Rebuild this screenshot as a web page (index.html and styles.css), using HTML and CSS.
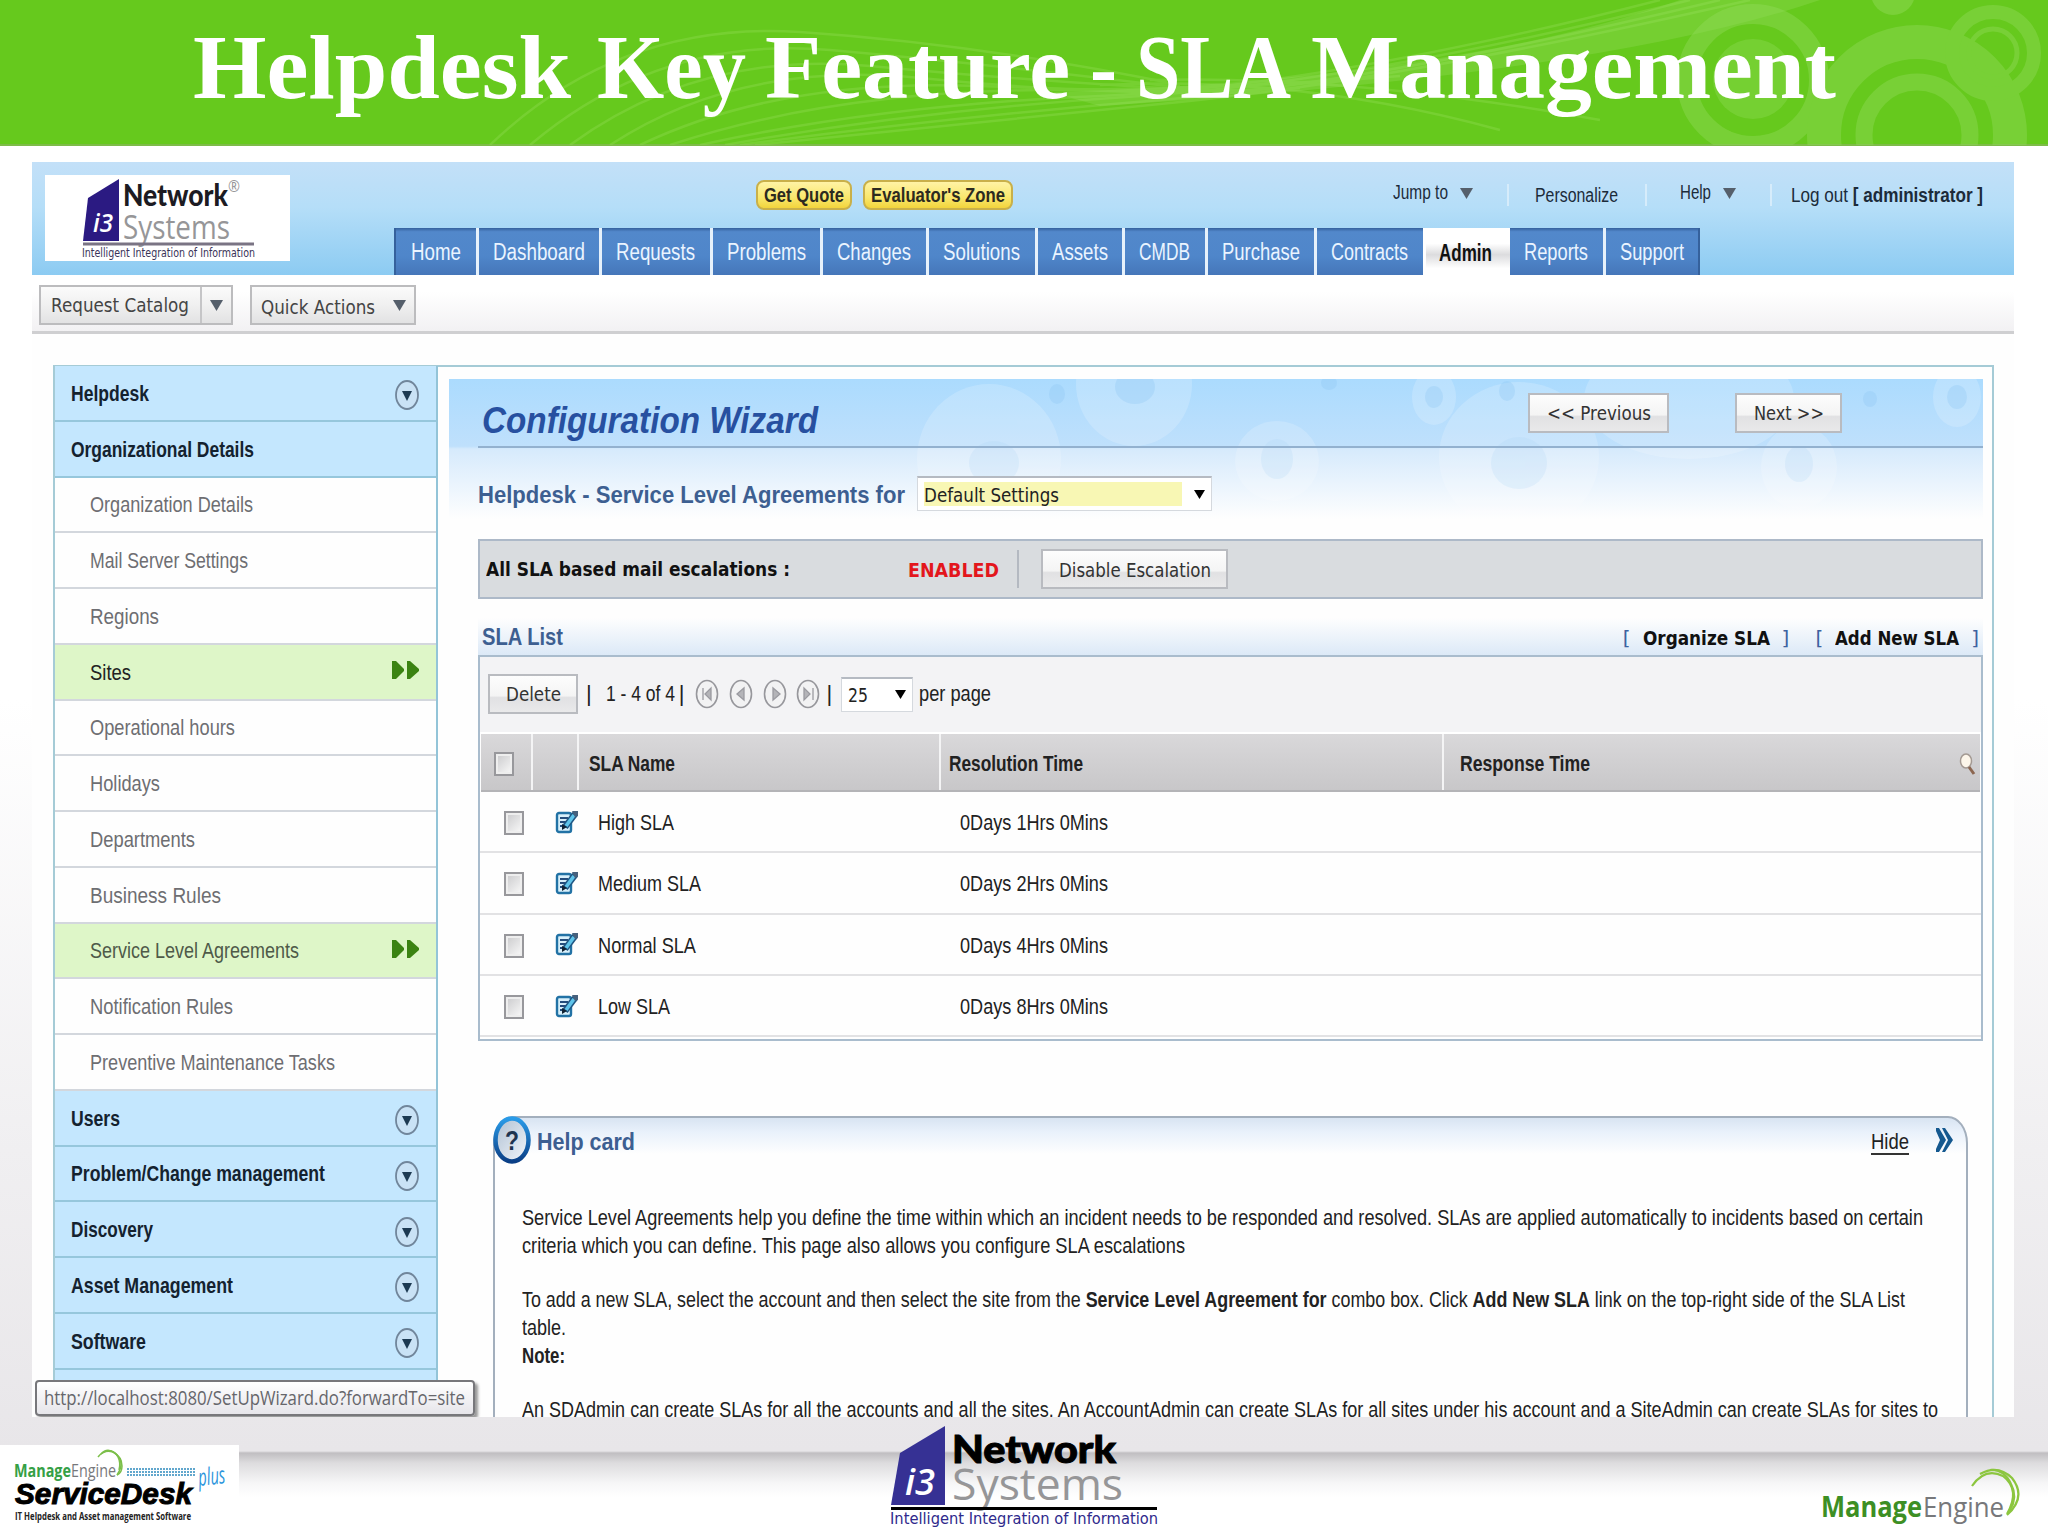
FILE: index.html
```html
<!DOCTYPE html>
<html lang="en">
<head>
  <meta charset="UTF-8" />
  <meta name="viewport" content="width=device-width, initial-scale=1.0"/>
  <title>Helpdesk Key Feature - SLA Management</title>
  <link rel="stylesheet" href="styles.css">
</head>
<body>
  <!-- shared icons -->
  <svg class="sprite" width="0" height="0">
    <symbol id="toggle" viewBox="0 0 24 30" preserveAspectRatio="none">
      <ellipse cx="12" cy="15" rx="11" ry="14" fill="#c9e2f5" stroke="#71869b" stroke-width="1.8"/>
      <path d="M7 11h10l-5 10z" fill="#1d3a52"/>
    </symbol>
    <symbol id="go" viewBox="0 0 27 18">
      <path d="M0 0h4l8 8v2l-8 8H0zM15 0h3l9 8v2l-9 8h-3z" fill="#3b8312"/>
    </symbol>
    <symbol id="edit" viewBox="0 0 23 24">
      <rect x="2" y="3" width="14" height="19" rx="2" fill="#d8f0fb" stroke="#2272a5" stroke-width="2.4"/>
      <path d="M5 8h8M5 12h6M5 16h4" stroke="#244d7c" stroke-width="1.8"/>
      <path d="M20 4 10 17" stroke="#205683" stroke-width="6.500"/>
      <path d="M19 5 11 16" stroke="#5fc4ea" stroke-width="3.600"/>
      <path d="M7 14v6l5-3z" fill="#123"/>
      <path d="M17 1h6v5l-3 1z" fill="#47617d"/>
    </symbol>
    <symbol id="down" viewBox="0 0 13 12" preserveAspectRatio="none">
      <path d="M0 0h13L6.500 12z" fill="currentColor"/>
    </symbol>
  </svg>

  <header class="banner">
    <svg class="banner-art" viewBox="0 0 2048 145">
      <g fill="none" stroke="#8fdc50" stroke-width="2.500" opacity=".4">
        <path d="M490 145Q620 20 800 32T1180 85"/>
        <path d="M530 145Q660 35 830 50T1200 90"/>
        <path d="M570 145Q700 50 870 66T1230 92"/>
        <path d="M610 145Q740 60 920 78T1260 92"/>
        <path d="M640 145Q780 78 980 86T1300 88"/>
        <path d="M670 145Q830 92 1040 90T1400 76"/>
        <path d="M700 145Q880 105 1100 96T1660 0"/>
        <path d="M725 145Q920 110 1140 96T1690 0"/>
        <path d="M740 145Q940 118 1160 100T1720 0"/>
        <path d="M755 145Q960 124 1180 102T1750 0"/>
        <path d="M1100 85Q1300 75 1500 130"/>
        <path d="M1150 80Q1350 75 1600 120"/>
      </g>
      <path d="M1050 92Q1450 80 1680 0h140Q1600 75 1100 106z" fill="#a5e56f" opacity=".25"/>
      <g fill="none" stroke="#93dc5c" opacity=".4">
        <circle cx="1753" cy="80" r="66" stroke-width="20"/>
        <circle cx="1917" cy="135" r="93" stroke-width="34"/>
        <circle cx="1917" cy="135" r="53" stroke-width="17"/>
        <circle cx="1993" cy="53" r="41" stroke-width="14"/>
        <circle cx="1993" cy="53" r="24" stroke-width="5"/>
      </g>
      <circle cx="1753" cy="79" r="40" fill="#93dc5c" opacity=".35"/>
      <circle cx="1893" cy="-7" r="22" fill="#93dc5c" opacity=".45"/>
    </svg>
    <h1>
      <span class="fit" data-w="378">Helpdesk</span>
      <span class="fit" data-w="149">Key</span>
      <span class="fit" data-w="305">Feature</span>
      <span class="fit" data-w="27">-</span>
      <span class="fit" data-w="155">SLA</span>
      <span class="fit" data-w="525">Management</span>
    </h1>
  </header>

  <main class="slide">
    <div class="app">
      <!-- Top bar -->
      <div class="topbar">
        <div class="logo-box">
          <svg width="245" height="86" viewBox="45 174 245 86">
            <path d="M83 240 88 197 119 178V240z" fill="#2b1a82"/>
            <text x="93" y="231" class="lg-i3 thin" font-size="25" textLength="20" lengthAdjust="spacingAndGlyphs">i3</text>
            <text x="123" y="205" class="lg-net" font-size="30" textLength="105" lengthAdjust="spacingAndGlyphs">Network</text>
            <text x="123" y="238" class="lg-sys" font-size="33" textLength="107" lengthAdjust="spacingAndGlyphs">Systems</text>
            <text x="228" y="191" class="lg-sys" font-size="17" textLength="12" lengthAdjust="spacingAndGlyphs">®</text>
            <path d="M83 243H254" stroke="#7a7484" stroke-width="3"/>
            <text x="82" y="256" class="lg-tag" font-size="12" fill="#3a3358" textLength="173" lengthAdjust="spacingAndGlyphs">Intelligent Integration of Information</text>
          </svg>
        </div>
        <div class="topbar-right">
          <div class="top-links">
            <a class="pill"><span class="fit" data-w="80">Get Quote</span></a>
            <a class="pill"><span class="fit" data-w="134">Evaluator's Zone</span></a>
            <div class="user-links">
              <a class="raised"><span class="fit" data-w="55">Jump to</span><svg class="arr"><use href="#down"/></svg></a>
              <i class="bar"></i>
              <a><span class="fit" data-w="83">Personalize</span></a>
              <i class="bar"></i>
              <a class="raised"><span class="fit" data-w="31">Help</span><svg class="arr"><use href="#down"/></svg></a>
              <i class="bar"></i>
              <a><span class="fit" data-w="192">Log out <b>[ administrator ]</b></span></a>
            </div>
          </div>
          <nav class="tabs">
            <a><span class="fit" data-w="50">Home</span></a>
            <a><span class="fit" data-w="92">Dashboard</span></a>
            <a><span class="fit" data-w="79">Requests</span></a>
            <a><span class="fit" data-w="79">Problems</span></a>
            <a><span class="fit" data-w="74">Changes</span></a>
            <a><span class="fit" data-w="77">Solutions</span></a>
            <a><span class="fit" data-w="56">Assets</span></a>
            <a><span class="fit" data-w="51">CMDB</span></a>
            <a><span class="fit" data-w="78">Purchase</span></a>
            <a><span class="fit" data-w="77">Contracts</span></a>
            <a class="active"><span class="fit" data-w="53">Admin</span></a>
            <a><span class="fit" data-w="64">Reports</span></a>
            <a><span class="fit" data-w="64">Support</span></a>
          </nav>
        </div>
      </div>

      <!-- Quick buttons -->
      <div class="quickbar">
        <div class="qbtn"><span class="qtext"><span class="fit" data-w="138">Request Catalog</span></span><span class="qarr"><svg class="arr"><use href="#down"/></svg></span></div>
        <div class="qbtn quick"><span class="fit" data-w="114">Quick Actions</span><svg class="arr"><use href="#down"/></svg></div>
      </div>

      <div class="frame">
        <!-- Sidebar -->
        <aside class="sidebar">
          <div class="row head"><span class="fit" data-w="78">Helpdesk</span><svg class="toggle"><use href="#toggle"/></svg></div>
          <div class="row head"><span class="fit" data-w="183">Organizational Details</span></div>
          <div class="row"><span class="fit" data-w="163">Organization Details</span></div>
          <div class="row"><span class="fit" data-w="158">Mail Server Settings</span></div>
          <div class="row"><span class="fit" data-w="69">Regions</span></div>
          <div class="row on"><span class="fit" data-w="41">Sites</span><svg class="go"><use href="#go"/></svg></div>
          <div class="row"><span class="fit" data-w="145">Operational hours</span></div>
          <div class="row"><span class="fit" data-w="70">Holidays</span></div>
          <div class="row"><span class="fit" data-w="105">Departments</span></div>
          <div class="row"><span class="fit" data-w="131">Business Rules</span></div>
          <div class="row on soft"><span class="fit" data-w="209">Service Level Agreements</span><svg class="go"><use href="#go"/></svg></div>
          <div class="row"><span class="fit" data-w="143">Notification Rules</span></div>
          <div class="row"><span class="fit" data-w="245">Preventive Maintenance Tasks</span></div>
          <div class="row head"><span class="fit" data-w="49">Users</span><svg class="toggle"><use href="#toggle"/></svg></div>
          <div class="row head"><span class="fit" data-w="254">Problem/Change management</span><svg class="toggle"><use href="#toggle"/></svg></div>
          <div class="row head"><span class="fit" data-w="82">Discovery</span><svg class="toggle"><use href="#toggle"/></svg></div>
          <div class="row head"><span class="fit" data-w="162">Asset Management</span><svg class="toggle"><use href="#toggle"/></svg></div>
          <div class="row head"><span class="fit" data-w="75">Software</span><svg class="toggle"><use href="#toggle"/></svg></div>
          <div class="row head"></div>
        </aside>

        <section class="content">
          <div class="wizard">
            <svg class="wizard-art" viewBox="0 0 1534 140">
              <g fill="#fff" opacity=".18">
                <ellipse cx="540" cy="80" rx="72" ry="75"/>
                <ellipse cx="685" cy="5" rx="58" ry="62"/>
                <ellipse cx="828" cy="82" rx="42" ry="40"/>
                <ellipse cx="1070" cy="78" rx="80" ry="75"/>
                <ellipse cx="1240" cy="20" rx="105" ry="60"/>
                <ellipse cx="1350" cy="88" rx="38" ry="42"/>
                <ellipse cx="985" cy="18" rx="22" ry="28"/>
                <ellipse cx="1508" cy="18" rx="24" ry="30"/>
              </g>
              <g fill="#8dc6f4" opacity=".3">
                <ellipse cx="608" cy="15" rx="8" ry="10"/>
                <ellipse cx="686" cy="8" rx="20" ry="17"/>
                <ellipse cx="985" cy="18" rx="9" ry="11"/>
                <ellipse cx="1058" cy="12" rx="8" ry="10"/>
                <ellipse cx="880" cy="4" rx="8" ry="7"/>
                <ellipse cx="1508" cy="18" rx="10" ry="12"/>
                <ellipse cx="1421" cy="20" rx="7" ry="8"/>
              </g>
              <g fill="#a9d4f7" opacity=".2">
                <ellipse cx="828" cy="80" rx="16" ry="20"/>
                <ellipse cx="1350" cy="85" rx="14" ry="18"/>
                <ellipse cx="545" cy="84" rx="25" ry="22"/>
                <ellipse cx="1070" cy="84" rx="28" ry="26"/>
              </g>
            </svg>
            <div class="wizard-head">
              <h2><span class="fit" data-w="336">Configuration Wizard</span></h2>
              <div class="btn prev"><span class="fit" data-w="104">&lt;&lt; Previous</span></div>
              <div class="btn next"><span class="fit" data-w="70">Next &gt;&gt;</span></div>
            </div>
            <div class="wizard-sub">
              <h3><span class="fit" data-w="427">Helpdesk - Service Level Agreements for</span></h3>
              <div class="select site"><span class="hl"><span class="fit" data-w="135">Default Settings</span></span><svg class="arr"><use href="#down"/></svg></div>
            </div>
          </div>

          <div class="escalation">
            <b class="esc-label"><span class="fit" data-w="304">All SLA based mail escalations :</span></b>
            <b class="esc-state"><span class="fit" data-w="91">ENABLED</span></b>
            <div class="btn"><span class="fit" data-w="152">Disable Escalation</span></div>
          </div>

          <div class="list-head">
            <h3><span class="fit" data-w="81">SLA List</span></h3>
            <div class="brk">[<b><span class="fit" data-w="127">Organize SLA</span></b>]</div>
            <div class="brk">[<b><span class="fit" data-w="124">Add New SLA</span></b>]</div>
          </div>

          <div class="list">
            <div class="pager">
              <div class="btn"><span class="fit" data-w="55">Delete</span></div>
              <span class="sep">|</span>
              <span class="fit" data-w="69">1 - 4 of 4</span>
              <span class="sep second">|</span>
              <svg class="pages" viewBox="0 0 126 30">
                <g fill="#f2f2f3" stroke="#97979c" stroke-width="1.600">
                  <ellipse cx="12" cy="15" rx="10.500" ry="13.500"/>
                  <ellipse cx="46" cy="15" rx="10.500" ry="13.500"/>
                  <ellipse cx="80" cy="15" rx="10.500" ry="13.500"/>
                  <ellipse cx="113" cy="15" rx="10.500" ry="13.500"/>
                </g>
                <g fill="#b4b4b8" stroke="#9a9aa0" stroke-width="1.300">
                  <path d="M8 9v12M16 9v12l-6-6z"/>
                  <path d="M49 9v12l-7-6z"/>
                  <path d="M78 9v12l7-6z"/>
                  <path d="M109 9v12l6-6zM118 9v12"/>
                </g>
              </svg>
              <span class="sep third">|</span>
              <div class="select count"><span class="fit" data-w="20">25</span><svg class="arr"><use href="#down"/></svg></div>
              <span class="fit" data-w="72">per page</span>
            </div>
            <div class="trow thead">
              <div class="cell c1"><i class="check"></i></div>
              <div class="cell c2"></div>
              <div class="cell c3"><span class="fit" data-w="86">SLA Name</span></div>
              <div class="cell c4"><span class="fit" data-w="134">Resolution Time</span></div>
              <div class="cell c5"><span class="fit" data-w="130">Response Time</span>
                <svg class="find" viewBox="0 0 17 22"><ellipse cx="7" cy="8" rx="5.500" ry="7" fill="#fdf6ea" stroke="#a49a93" stroke-width="1.500"/><path d="m10 14 5 7" stroke="#8c6650" stroke-width="3"/></svg>
              </div>
            </div>
            <div class="trow">
              <div class="cell c1"><i class="check"></i></div>
              <div class="cell c2"><svg class="edit"><use href="#edit"/></svg></div>
              <div class="cell c3"><span class="fit" data-w="76">High SLA</span></div>
              <div class="cell c4"><span class="fit" data-w="148">0Days 1Hrs 0Mins</span></div>
            </div>
            <div class="trow">
              <div class="cell c1"><i class="check"></i></div>
              <div class="cell c2"><svg class="edit"><use href="#edit"/></svg></div>
              <div class="cell c3"><span class="fit" data-w="103">Medium SLA</span></div>
              <div class="cell c4"><span class="fit" data-w="148">0Days 2Hrs 0Mins</span></div>
            </div>
            <div class="trow">
              <div class="cell c1"><i class="check"></i></div>
              <div class="cell c2"><svg class="edit"><use href="#edit"/></svg></div>
              <div class="cell c3"><span class="fit" data-w="98">Normal SLA</span></div>
              <div class="cell c4"><span class="fit" data-w="148">0Days 4Hrs 0Mins</span></div>
            </div>
            <div class="trow">
              <div class="cell c1"><i class="check"></i></div>
              <div class="cell c2"><svg class="edit"><use href="#edit"/></svg></div>
              <div class="cell c3"><span class="fit" data-w="72">Low SLA</span></div>
              <div class="cell c4"><span class="fit" data-w="148">0Days 8Hrs 0Mins</span></div>
            </div>
          </div>

          <!-- Help card -->
          <div class="help">
            <svg class="help-icon" viewBox="0 0 38 48">
              <defs>
                <linearGradient id="ring" x1="0" y1="0" x2="0" y2="1"><stop offset="0" stop-color="#2a9be8"/><stop offset="1" stop-color="#0b3f86"/></linearGradient>
                <linearGradient id="disc" x1="0" y1="0" x2="1" y2="1"><stop offset="0" stop-color="#aebfd2"/><stop offset="1" stop-color="#f4f7fb"/></linearGradient>
              </defs>
              <ellipse cx="19" cy="24" rx="16.500" ry="21.500" fill="url(#disc)" stroke="url(#ring)" stroke-width="4.500"/>
              <text x="12" y="34" class="q" textLength="14" lengthAdjust="spacingAndGlyphs">?</text>
            </svg>
            <div class="help-head">
              <h3><span class="fit" data-w="98">Help card</span></h3>
              <a><span class="fit" data-w="38">Hide</span></a>
              <svg class="chev" viewBox="0 0 17 24"><path d="M0 0h3l7 12L3 24H0v-3l4-9-4-9zM6 0h3l8 12-8 12H6l6-12z" fill="#14588f"/></svg>
            </div>
            <div class="help-body">
              <p>
                <span class="fit" data-w="1401">Service Level Agreements help you define the time within which an incident needs to be responded and resolved. SLAs are applied automatically to incidents based on certain</span>
                <span class="fit" data-w="663">criteria which you can define. This page also allows you configure SLA escalations</span>
              </p>
              <p>
                <span class="fit" data-w="1383">To add a new SLA, select the account and then select the site from the <b>Service Level Agreement for</b> combo box. Click <b>Add New SLA</b> link on the top-right side of the SLA List</span>
                <span class="fit" data-w="44">table.</span>
                <b><span class="fit" data-w="43">Note:</span></b>
              </p>
              <p>
                <span class="fit" data-w="1416">An SDAdmin can create SLAs for all the accounts and all the sites. An AccountAdmin can create SLAs for all sites under his account and a SiteAdmin can create SLAs for sites to</span>
              </p>
            </div>
          </div>
        </section>
      </div>
      <div class="status"><span class="fit" data-w="421">http://localhost:8080/SetUpWizard.do?forwardTo=site</span></div>
    </div>
  </main>

  <footer>
    <div class="sd-logo">
      <svg width="239" height="91" viewBox="0 1445 239 91">
        <text x="14" y="1477" class="me-b" font-size="18" textLength="57" lengthAdjust="spacingAndGlyphs">Manage</text>
        <text x="71" y="1477" class="me-l" font-size="18" textLength="45" lengthAdjust="spacingAndGlyphs">Engine</text>
        <g fill="none" stroke="#7cbf4a" stroke-width="1.500">
          <path d="M98 1457Q104 1449 113 1452 122 1457 122 1466 122 1473 117 1475"/>
          <path d="M101 1454Q107 1447 115 1453 126 1462 117 1475"/>
          <path d="M104 1452Q113 1448 118 1457 121 1463 119 1470"/>
        </g>
        <path d="M127 1469H195M127 1472H195M127 1475H195" stroke="#62a7cd" stroke-width="2" stroke-dasharray="2 1"/>
        <text x="15" y="1504" class="sd" textLength="177" lengthAdjust="spacingAndGlyphs">ServiceDesk</text>
        <text x="15" y="1520" class="sd-tag" textLength="176" lengthAdjust="spacingAndGlyphs">IT Helpdesk and Asset management Software</text>
        <text x="199" y="1486" class="plus" textLength="27" lengthAdjust="spacingAndGlyphs" transform="rotate(-6 199 1486)">plus</text>
      </svg>
    </div>
    <svg class="i3-logo" width="272" height="110" viewBox="888 1424 272 110">
      <path d="M891 1505 900 1453 945 1426V1505z" fill="#363194"/>
      <text x="905" y="1495" class="lg-i3 thin" font-size="36" textLength="30" lengthAdjust="spacingAndGlyphs">i3</text>
      <text x="952" y="1463" class="lg-net big" font-size="38" textLength="164" lengthAdjust="spacingAndGlyphs">Network</text>
      <text x="952" y="1500" class="lg-sys" font-size="43" textLength="171" lengthAdjust="spacingAndGlyphs">Systems</text>
      <path d="M891 1508.500H1157" stroke="#000" stroke-width="3"/>
      <text x="890" y="1524" class="lg-tag" font-size="15" fill="#2f2a8c" textLength="268" lengthAdjust="spacingAndGlyphs">Intelligent Integration of Information</text>
    </svg>
    <svg class="me-logo" width="206" height="70" viewBox="1818 1462 206 70">
      <text x="1821" y="1517" class="me-b dark" font-size="28" textLength="101" lengthAdjust="spacingAndGlyphs">Manage</text>
      <text x="1923" y="1517" class="me-l" font-size="28" textLength="81" lengthAdjust="spacingAndGlyphs">Engine</text>
      <g fill="none" stroke="#8cc63f" stroke-width="2.200">
        <path d="M1972 1486Q1985 1467 2003 1476 2021 1490 2007 1514"/>
        <path d="M1980 1474Q1998 1464 2012 1478 2027 1497 2007 1515"/>
        <path d="M1990 1470Q2004 1469 2011 1484 2018 1497 2010 1510"/>
      </g>
    </svg>
  </footer>
  <script src="script.js"></script>
</body>
</html>
```

FILE: script.js
```js
// squeeze each label horizontally so it takes exactly data-w pixels
document.querySelectorAll(".fit").forEach(function (el) {
  const inner = document.createElement("span");
  inner.className = "fit-in";
  while (el.firstChild) inner.appendChild(el.firstChild);
  el.appendChild(inner);
  const natural = inner.getBoundingClientRect().width;
  el.style.width = el.dataset.w + "px";
  inner.style.transform = "scaleX(" + el.dataset.w / natural + ")";
});
```

FILE: styles.css
```css
* {
  box-sizing: border-box;
}
body {
  margin: 0;
  width: 2048px;
  height: 1536px;
  overflow: hidden;
  font-family: "Liberation Sans", Arial, sans-serif;
  font-size: 22px;
  color: #222;
  background: linear-gradient(#fff 700px, #f0eff1 1150px, #e8e6e9 1450px);
}
h1, h2, h3, p {
  margin: 0;
}
svg {
  display: block;
  flex: none;
}
.sprite {
  position: absolute;
}
.fit {
  display: inline-block;
  white-space: nowrap;
  flex: none;
}
.fit-in {
  display: inline-block;
  transform-origin: 0 50%;
}
.arr {
  width: 13px;
  height: 11px;
  color: #555f6b;
}

/* banner */
.banner {
  position: relative;
  height: 146px;
  background: #66c91d;
  border-bottom: 2px solid #7dbb48;
}
.banner-art {
  position: absolute;
  top: 0;
  left: 0;
  width: 2048px;
  height: 145px;
}
.banner h1 {
  position: relative;
  display: flex;
  gap: 19.5px;
  padding: 15px 0 0 193px;
  font: bold 92px/104px "Liberation Serif", serif;
  color: #fff;
}
.banner h1 .fit:first-child {
  margin-right: 6px;
}

.slide {
  height: 1271px;
  padding: 16px 34px 0 32px;
}
.app {
  position: relative;
  height: 1255px;
  overflow: hidden;
  background: #fefefe;
}

/* top bar */
.topbar {
  display: flex;
  height: 113px;
  background: linear-gradient(#c3e0f8, #b5def8 40%, #8ccbf2);
}
.logo-box {
  margin: 13px 104px 0 13px;
  width: 245px;
  height: 86px;
  background: #fff;
}
.lg-i3 {
  font-family: "Open Sans", sans-serif;
  font-style: italic;
  font-weight: bold;
  fill: #fff;
}
.lg-i3.thin {
  font-weight: 600;
}
.lg-net {
  font-family: "Lato", sans-serif;
  font-weight: 900;
  fill: #1c1b22;
}
.lg-net.big {
  fill: #000;
  stroke: #000;
  stroke-width: 1;
}
.lg-sys {
  font-family: "Open Sans", sans-serif;
  fill: #969698;
}
.lg-tag {
  font-family: "DejaVu Sans", sans-serif;
}
.topbar-right {
  flex: 1;
}
.top-links {
  display: flex;
  height: 66px;
  padding: 18px 31px 0 362px;
  font-size: 20px;
  color: #1c2b3a;
}
.pill {
  height: 30px;
  margin-right: 11px;
  padding: 0 6px;
  border: 2px solid #c9b04a;
  border-radius: 8px;
  background: linear-gradient(#fff3a5, #f9e76c 60%, #f2d43c);
  font-weight: bold;
  line-height: 26px;
  color: #2c2a20;
}
.user-links {
  display: flex;
  margin-left: auto;
  line-height: 30px;
}
.user-links a {
  display: flex;
}
.user-links .arr {
  margin: 11px 0 0 12px;
}
.user-links .raised {
  height: 24px;
  margin-top: -3px;
}
.user-links .bar {
  width: 2px;
  height: 22px;
  margin: 4px 19px 0 34px;
  background: #d6ecfb;
}
.user-links .bar:nth-of-type(1) {
  margin-right: 26px;
}
.user-links .bar:nth-of-type(2) {
  margin: 4px 33px 0 27px;
}
.tabs {
  display: flex;
  width: 1305px;
  height: 47px;
  font-size: 23px;
  line-height: 48px;
  color: #eaf4ff;
}
.tabs a {
  padding: 0 14.6px 0 14px;
  border-left: 3px solid #e6f1fb;
  background: linear-gradient(#34609c, #5288cb 8%, #4f86ca 60%, #4576b9);
  height: 47px;
}
.tabs a:first-child {
  padding-left: 15px;
  border-left: 2px solid #35619c;
}
.tabs a:last-child {
  border-right: 2px solid #35619c;
}
.tabs .active {
  padding: 0 18px 0 13px;
  border-top: 2px solid #a3a9b3;
  line-height: 46px;
  background: linear-gradient(#fff 30%, #dcdcde 55%, #fff 85%);
  border-color: #fff;
  font-weight: bold;
  color: #111;
}
.tabs .active + a {
  padding-left: 14px;
  border-left: 0;
}

/* quick buttons */
.quickbar {
  display: flex;
  gap: 17px;
  height: 59px;
  padding: 10px 7px;
  border-bottom: 3px solid #cfcfd1;
  background: linear-gradient(#fff 30%, #f2f1f3);
  font: 20px "DejaVu Sans", sans-serif;
  color: #444;
}
.qbtn {
  display: flex;
  align-items: center;
  height: 40px;
  border: 2px solid #bcbcbe;
  background: linear-gradient(#fbfbfb, #f0f0f0 50%, #e2e2e3);
}
.qtext {
  padding: 0 11px 0 10px;
}
.qarr {
  display: flex;
  align-items: center;
  height: 36px;
  padding: 0 8px;
  border-left: 2px solid #c5c5c7;
}
.quick {
  padding: 3px 7px 0 9px;
  gap: 18px;
  width: 166px;
}
.quick .arr {
  margin-top: -3px;
}

/* frame */
.frame {
  display: flex;
  margin: 31px 20px 0 21px;
  height: 1060px;
  border: 2px solid #a5cbd6;
  border-bottom: 0;
}
.sidebar {
  width: 383px;
  margin-top: -1px;
  border-right: 2px solid #93c4d8;
}
.row {
  display: flex;
  align-items: center;
  justify-content: space-between;
  height: 55.75px;
  padding: 2px 17px 0 35px;
  border-bottom: 2px solid #d3d7dd;
  color: #6e6e72;
}
.head {
  padding-left: 16px;
  background: #c4e7fe;
  border-color: #96c7dc;
  font-weight: bold;
  color: #14222f;
}
.on {
  background: #def6c8;
  color: #222;
}
.on.soft {
  color: #4e5a48;
}
.toggle {
  width: 24px;
  height: 30px;
  margin-top: 3px;
}
.go {
  width: 27px;
  height: 18px;
  margin-top: -5px;
}
.content {
  flex: 1;
  padding: 12px 9px 0 11px;
}
.btn {
  display: flex;
  align-items: center;
  justify-content: center;
  height: 40px;
  border: 2px solid #b9bbc0;
  background: linear-gradient(#fdfdfd, #f4f4f4 55%, #e1e1e3 60%, #e9e9ea);
  font: 20px "DejaVu Sans", sans-serif;
  color: #333;
}

/* wizard banner */
.wizard {
  position: relative;
  height: 140px;
  background: linear-gradient(#abdbfe, #bfe0fc 48%, #d6eafc 50%, #fefefe);
}
.wizard-art {
  position: absolute;
  top: 0;
  left: 0;
  width: 1534px;
  height: 140px;
}
.wizard-head {
  position: relative;
  display: flex;
  height: 69px;
  margin-left: 29px;
  padding: 14px 0 0 4px;
  border-bottom: 2px solid #93b1cf;
}
.wizard-head h2 {
  margin-top: 8px;
  font: italic bold 36px/40px "Liberation Sans", sans-serif;
  color: #2750a0;
}
.prev {
  width: 141px;
  margin-left: 710px;
}
.next {
  width: 107px;
  margin-left: 66px;
}
.wizard-sub {
  position: relative;
  display: flex;
  align-items: center;
  margin: 28px 0 0 29px;
  height: 35px;
}
h3 {
  font-size: 24px;
  font-weight: bold;
  color: #3d5f91;
}
.wizard-sub h3 {
  padding-top: 2px;
}
.select {
  display: flex;
  align-items: center;
  height: 35px;
  border: 1px solid #d5d9de;
  border-top: 2px solid #b5bac2;
  background: #fff;
  font: 20px "DejaVu Sans", sans-serif;
  color: #222;
}
.select .arr {
  width: 11px;
  height: 9px;
  margin-left: auto;
  color: #000;
}
.site {
  width: 295px;
  margin-left: 12px;
  padding: 0 6px;
}
.hl {
  width: 258px;
  height: 24px;
  line-height: 26px;
  background: #f8f7b4;
}

.escalation {
  display: flex;
  align-items: center;
  height: 60px;
  margin: 20px 0 0 29px;
  padding: 0 0 0 6px;
  border: 2px solid #adb9c8;
  background: #d9dcdf;
  font: 20px "DejaVu Sans", sans-serif;
}
.esc-label {
  width: 422px;
  color: #111;
}
.esc-state {
  width: 111px;
  height: 38px;
  border-right: 2px solid #b4b9c1;
  line-height: 40px;
  color: #e3161c;
}
.escalation .btn {
  width: 187px;
  padding-top: 2px;
  margin-left: 22px;
}

.list-head {
  display: flex;
  align-items: flex-end;
  height: 37px;
  margin: 19px 0 0 29px;
  padding: 0 4px 4px;
  background: linear-gradient(#fefefe, #dce9f7);
}
.list-head h3 {
  margin-right: auto;
}
.brk {
  display: flex;
  gap: 12px;
  margin: 0 0 1px 26px;
  font: 20px "DejaVu Sans", sans-serif;
  color: #3d62a0;
}
.brk b {
  color: #111;
}
.list {
  height: 386px;
  margin-left: 29px;
  border: 2px solid #a9bccd;
}
.pager {
  display: flex;
  align-items: center;
  height: 75px;
  padding: 0 0 1px 8px;
  background: #f3f3f5;
}
.pager .btn {
  width: 90px;
}
.sep {
  margin: 0 14px 0 8px;
}
.sep.second {
  margin: 0 11px 0 4px;
}
.sep.third {
  margin: 0 9px 0 5px;
}
.pages {
  width: 126px;
  height: 30px;
}
.count {
  width: 72px;
  margin-right: 6px;
  padding: 0 6px;
}
.trow {
  display: flex;
  height: 61.3px;
  padding-top: 3px;
  border-bottom: 2px solid #e2e2e4;
}
.cell {
  display: flex;
  align-items: center;
}
.c1 {
  width: 53px;
  padding-left: 24px;
}
.c2 {
  width: 46px;
  padding-left: 22px;
}
.c3 {
  width: 362px;
  padding-left: 19px;
}
.c4 {
  width: 504px;
  padding-left: 19px;
}
.c5 {
  flex: 1;
  justify-content: space-between;
  padding: 0 4px 0 16px;
}
.thead {
  height: 60px;
  margin: 0 1px 0 1px;
  padding: 0;
  border-top: 2px solid #fff;
  border-bottom: 2px solid #b4b4b7;
  background: linear-gradient(#d9d8da, #c8c7c9);
  font-weight: bold;
}
.thead .cell {
  padding-top: 3px;
  border-right: 2px solid #f4f4f5;
}
.thead .c1 {
  width: 52px;
  padding-left: 13px;
}
.thead .c3 {
  padding-left: 10px;
}
.thead .c4 {
  width: 503px;
  padding-left: 8px;
}
.thead .c5 {
  border: 0;
}
.check {
  width: 20px;
  height: 24px;
  border: 2px solid #98989c;
  background: linear-gradient(135deg, #c9c9cb, #fafafa);
  box-shadow: inset 0 0 0 2px #eee;
}
.edit {
  width: 23px;
  height: 24px;
  margin-top: -3px;
}
.find {
  width: 17px;
  height: 22px;
}

/* help card */
.help {
  position: relative;
  width: 1475px;
  height: 320px;
  margin: 75px 0 0 44px;
  border: 2px solid #a3afbd;
  border-radius: 20px 20px 0 0 / 27px 27px 0 0;
  background: linear-gradient(#d8e4f2, #e9f1fb 14px, #fefefe 36px);
}
.help-icon {
  position: absolute;
  left: -2px;
  top: -2px;
  width: 38px;
  height: 48px;
}
.q {
  font: bold 28px "Liberation Sans", sans-serif;
  fill: #1e3450;
}
.help-head {
  display: flex;
  align-items: center;
  height: 48px;
  padding: 0 13px 0 42px;
}
.help-head h3 {
  margin-right: auto;
}
.help-head a {
  border-bottom: 2px solid #333;
  line-height: 23px;
}
.chev {
  width: 17px;
  height: 24px;
  margin: -4px 0 0 27px;
}
.help-body {
  padding: 38px 0 0 27px;
  line-height: 28px;
}
.help-body p {
  margin-bottom: 26px;
}
.help-body .fit {
  display: block;
}

/* browser link preview */
.status {
  position: absolute;
  left: 3px;
  top: 1218px;
  width: 440px;
  height: 36px;
  padding-left: 7px;
  border: 2px solid #77777b;
  border-radius: 4px;
  background: linear-gradient(#fff, #e6e5ea);
  box-shadow: 3px 3px 3px #999;
  font: 20px/32px "Open Sans", sans-serif;
  color: #66666b;
}

footer {
  display: flex;
  height: 119px;
  background: linear-gradient(transparent 34px, #c0bec1 36px, #dddcde 46px, #f6f6f7 66px, #fff 80px);
}
.sd-logo {
  width: 239px;
  height: 91px;
  margin-top: 28px;
  background: #fff;
}
.i3-logo {
  margin: 7px 0 0 649px;
}
.me-logo {
  margin: 45px 0 0 658px;
}
.me-b {
  font-family: "Open Sans", sans-serif;
  font-weight: bold;
  fill: #35a046;
}
.me-b.dark {
  fill: #3d8f24;
}
.me-l {
  font-family: "Open Sans", sans-serif;
  fill: #77787b;
}
.sd {
  font: italic bold 29px "Liberation Sans", sans-serif;
  fill: #000;
  stroke: #000;
  stroke-width: 1;
}
.sd-tag {
  font: bold 11px "Open Sans", sans-serif;
  fill: #222;
}
.plus {
  font: italic 24px "Open Sans", sans-serif;
  fill: #2b95dc;
}
```
